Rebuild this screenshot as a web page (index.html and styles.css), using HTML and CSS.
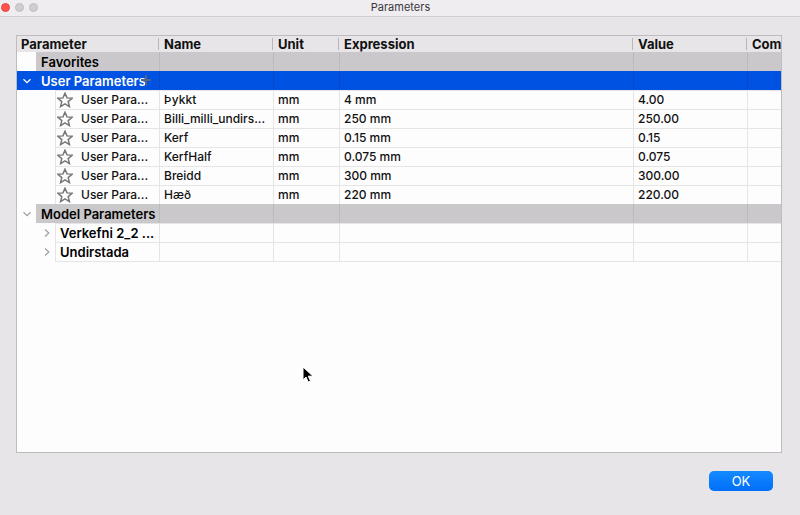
FILE: index.html
```html
<!DOCTYPE html>
<html lang="en">
<head>
<meta charset="utf-8">
<title>Parameters</title>
<link rel="stylesheet" href="styles.css">
</head>
<body>
<svg class="defs" aria-hidden="true">
  <symbol id="star" viewBox="0 0 16 16"><path d="M8 1.2l2 4.7 5.1.4-3.9 3.3 1.2 5L8 11.9l-4.4 2.7 1.2-5L.9 6.3 6 5.9z" fill="none" stroke="#77767a" stroke-width="1.5"/></symbol>
  <symbol id="down" viewBox="0 0 10 10"><path d="M1.5 3.2L5 6.7l3.5-3.5" fill="none" stroke="currentColor" stroke-width="1.3"/></symbol>
  <symbol id="right" viewBox="0 0 10 10"><path d="M3 1.5L6.8 5 3 8.5" fill="none" stroke="currentColor" stroke-width="1.3"/></symbol>
</svg>
<header class="titlebar">
  <div class="lights"><button class="light close" aria-label="Close"></button><button class="light" aria-label="Minimize" disabled></button><button class="light" aria-label="Zoom" disabled></button></div>
  <h1 class="title">Parameters</h1>
</header>
<main class="content">
  <div class="panel">
    <table class="grid">
      <colgroup><col class="c-param"><col class="c-name"><col class="c-unit"><col><col class="c-value"><col class="c-comment"></colgroup>
      <thead>
        <tr><th>Parameter</th><th>Name</th><th>Unit</th><th>Expression</th><th>Value</th><th>Com</th></tr>
      </thead>
      <tbody>
        <tr class="group"><td class="tree"><div class="node"><span class="gutter"></span><span class="label">Favorites</span></div></td><td></td><td></td><td></td><td></td><td></td></tr>
        <tr class="group selected"><td class="tree"><div class="node"><span class="gutter"><svg class="chev"><use href="#down"/></svg></span><span class="label">User Parameters</span><svg class="plus" viewBox="0 0 10 10"><path d="M5 0v10M0 5h10" stroke="#55647f" stroke-width="2"/></svg></div></td><td></td><td></td><td></td><td></td><td></td></tr>
        <tr class="leaf"><td class="tree"><div class="node"><span class="gutter wide"></span><span class="label"><svg class="star"><use href="#star"/></svg>User Para...</span></div></td><td>Þykkt</td><td>mm</td><td>4 mm</td><td>4.00</td><td></td></tr>
        <tr class="leaf"><td class="tree"><div class="node"><span class="gutter wide"></span><span class="label"><svg class="star"><use href="#star"/></svg>User Para...</span></div></td><td>Billi_milli_undirs...</td><td>mm</td><td>250 mm</td><td>250.00</td><td></td></tr>
        <tr class="leaf"><td class="tree"><div class="node"><span class="gutter wide"></span><span class="label"><svg class="star"><use href="#star"/></svg>User Para...</span></div></td><td>Kerf</td><td>mm</td><td>0.15 mm</td><td>0.15</td><td></td></tr>
        <tr class="leaf"><td class="tree"><div class="node"><span class="gutter wide"></span><span class="label"><svg class="star"><use href="#star"/></svg>User Para...</span></div></td><td>KerfHalf</td><td>mm</td><td>0.075 mm</td><td>0.075</td><td></td></tr>
        <tr class="leaf"><td class="tree"><div class="node"><span class="gutter wide"></span><span class="label"><svg class="star"><use href="#star"/></svg>User Para...</span></div></td><td>Breidd</td><td>mm</td><td>300 mm</td><td>300.00</td><td></td></tr>
        <tr class="leaf"><td class="tree"><div class="node"><span class="gutter wide"></span><span class="label"><svg class="star"><use href="#star"/></svg>User Para...</span></div></td><td>Hæð</td><td>mm</td><td>220 mm</td><td>220.00</td><td></td></tr>
        <tr class="group"><td class="tree"><div class="node"><span class="gutter"><svg class="chev"><use href="#down"/></svg></span><span class="label">Model Parameters</span></div></td><td></td><td></td><td></td><td></td><td></td></tr>
        <tr class="sub"><td class="tree"><div class="node"><span class="gutter wide"><svg class="chev"><use href="#right"/></svg></span><span class="label">Verkefni 2_2 ...</span></div></td><td></td><td></td><td></td><td></td><td></td></tr>
        <tr class="sub last"><td class="tree"><div class="node"><span class="gutter wide"><svg class="chev"><use href="#right"/></svg></span><span class="label">Undirstada</span></div></td><td></td><td></td><td></td><td></td><td></td></tr>
      </tbody>
    </table>
  </div>
  <footer class="actions"><button class="ok">OK</button></footer>
</main>
<svg class="cursor" viewBox="0 0 12 18" aria-hidden="true"><path d="M1 1v13l3-3 2.2 5 2.3-1-2.2-4.8H11z" fill="#000" stroke="#fff" stroke-width="1"/></svg>
</body>
</html>
```
FILE: styles.css
```css
* { box-sizing: border-box; }
body {
  margin: 0;
  min-height: 100vh;
  display: flex;
  flex-direction: column;
  background: #e7e5e7;
  color: #111;
  font: 500 12px/18px Inter, "Liberation Sans", sans-serif;
}
.defs { display: none; }
.titlebar {
  display: grid;
  grid-template-columns: 1fr auto 1fr;
  height: 17px;
  padding-left: 1px;
  background: #f0edf0;
  border-bottom: 1px solid #d0ced0;
}
.lights { display: flex; align-items: center; gap: 5px; padding-bottom: 2px; }
.light {
  width: 9px;
  height: 9px;
  padding: 0;
  border: 1px solid #c0bec0;
  border-radius: 50%;
  background: #cfcdcf;
}
.light.close { background: #ff5149; border-color: #e5453f; }
.title {
  margin: 0;
  color: #39373b;
  font-size: 11px;
  font-weight: 400;
  line-height: 14px;
}
.content {
  flex: 1;
  display: flex;
  flex-direction: column;
  padding: 18px 18px 24px 16px;
}
.panel {
  flex: 1;
  overflow: hidden;
  background: #fefdfe;
  border: 1px solid #bebcbe;
}
.grid {
  width: 100%;
  table-layout: fixed;
  border-spacing: 0;
}
.c-param { width: 143px; }
.c-name, .c-value { width: 114px; }
.c-unit { width: 66px; }
.c-comment { width: 33px; }
th {
  height: 16px;
  padding: 0 0 0 4px;
  overflow: hidden;
  background: linear-gradient(#b9b7b9, #b9b7b9) right 1px center / 1px 12px no-repeat #e7e5e7;
  font-size: 13px;
  font-weight: 700;
  line-height: 16px;
  text-align: left;
  white-space: nowrap;
}
th:last-child { background: #e7e5e7; }
td {
  height: 19px;
  padding: 0 0 0 4px;
  border-top: 1px solid #e6e5e6;
  border-right: 1px solid #e6e5e6;
  overflow: hidden;
  white-space: nowrap;
}
td:last-child { border-right: 0; }
.tree { padding: 0; border-top: 0; }
.node { display: flex; height: 19px; }
.gutter {
  display: flex;
  flex: none;
  width: 19px;
  align-items: center;
  justify-content: center;
  color: #a3a1a5;
}
.gutter.wide { width: 38px; justify-content: flex-end; padding-right: 3px; }
.chev { width: 10px; height: 10px; }
.label {
  display: flex;
  flex: 1;
  align-items: center;
  gap: 8px;
  padding-left: 5px;
  white-space: nowrap;
}
.leaf .label, .sub .label {
  padding-left: 4px;
  border-left: 1px solid #e6e5e6;
  border-top: 1px solid #e6e5e6;
}
.leaf .label { padding-left: 1px; }
.star { width: 16px; height: 16px; }
.group .label, .sub .label { color: #000; font-size: 13px; font-weight: 600; }
.group td:not(.tree), .group .label { background: #cac8ca; }
.group td { border-color: #bcbabc; }
.group td:not(.tree) { border-top-color: #cac8ca; }
.selected td.tree, .selected td:not(.tree), .selected .label { background: #0052e2; }
.selected td, .selected td:not(.tree) { border-color: #0052e2; border-right-color: #0a49c4; }
.selected .label, .selected .gutter { color: #fff; }
.selected .node { position: relative; }
.plus { position: absolute; right: 8px; top: 4px; width: 10px; height: 10px; }
.last td:not(.tree), .last .label { border-bottom: 1px solid #e6e5e6; }
.last td { height: 20px; }
.last .node { height: 20px; }
.actions {
  display: flex;
  justify-content: flex-end;
  padding: 18px 9px 0 0;
}
.ok {
  width: 64px;
  height: 20px;
  padding: 0;
  border: 0;
  border-radius: 5px;
  background: linear-gradient(#158aff, #006efa);
  color: #fff;
  font: 400 13px/18px Inter, "Liberation Sans", sans-serif;
}
.cursor {
  position: absolute;
  left: 302px;
  top: 366px;
  width: 12px;
  height: 18px;
}
```
